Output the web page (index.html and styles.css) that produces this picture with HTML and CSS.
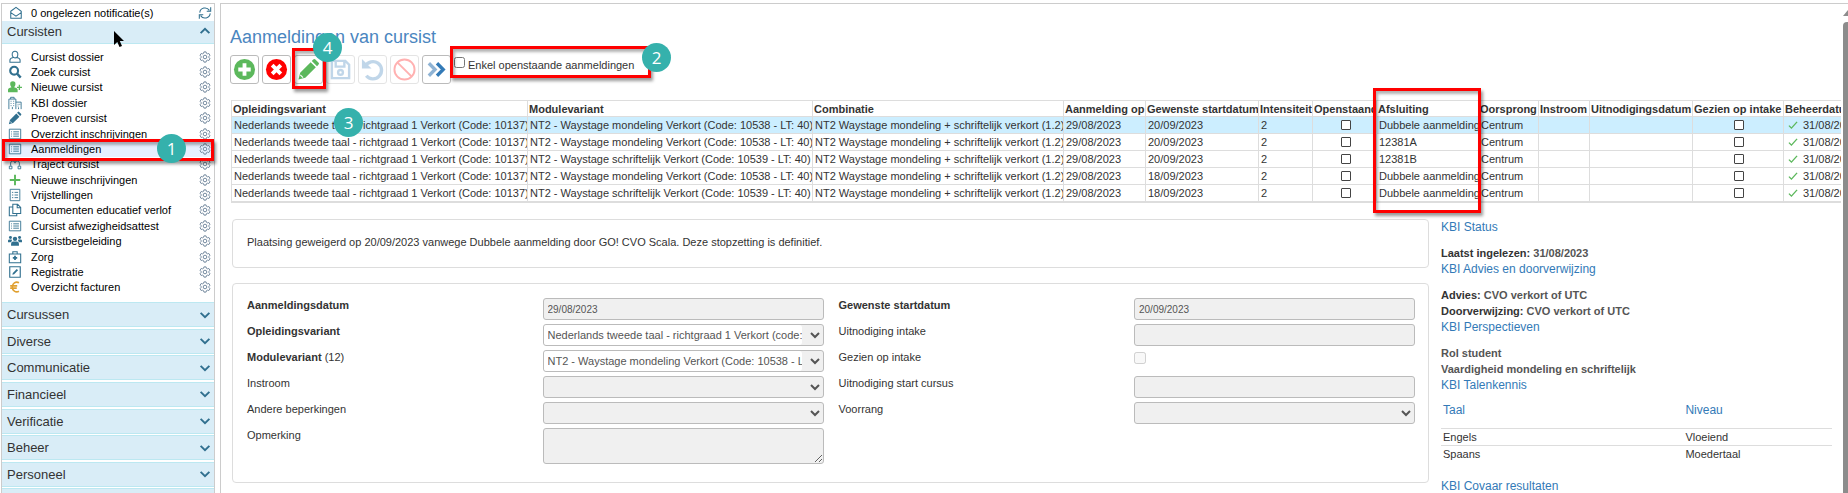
FILE: index.html
```
<!DOCTYPE html>
<html lang="nl">
<head>
    <meta charset="UTF-8">
    <meta name="viewport" content="width=device-width, initial-scale=1.0">
    <title>Aanmeldingen van cursist</title>
    <link rel="stylesheet" href="styles.css">
</head>
<body>
    <svg class="sprite" aria-hidden="true">
        <symbol id="i-gear" viewBox="0 0 16 16"><path d="M6.600 1.200h2.800l.5 1.900 1.300.7 1.900-.5 1.500 2.400-1.300 1.400v1.800l1.300 1.400-1.500 2.400-1.900-.5-1.300.7-.5 1.900H6.600l-.5-1.900-1.300-.7-1.900.5-1.500-2.400 1.300-1.400V7.100L1.400 5.700l1.500-2.400 1.900.5 1.300-.7z" fill="none" stroke="currentColor" stroke-width="1.300"/><circle cx="8" cy="8" r="2.400" fill="none" stroke="currentColor" stroke-width="1.300"/></symbol>
        <symbol id="i-mail" viewBox="0 0 16 16"><path d="M2 6l6-4.500L14 6v8H2zM2 7.500l6 4 6-4" fill="none" stroke="currentColor" stroke-width="1.200"/></symbol>
        <symbol id="i-refresh" viewBox="0 0 16 16"><path d="M2 7.500a6 6 0 0 1 11-2.500M14.500 1.500V6H10M14 8.500A6 6 0 0 1 3 11M1.500 14.500V10H6" fill="none" stroke="currentColor" stroke-width="1.200"/></symbol>
        <symbol id="i-up" viewBox="0 0 16 16"><path d="M3 10.500l5-5 5 5" fill="none" stroke="currentColor" stroke-width="2.200"/></symbol>
        <symbol id="i-down" viewBox="0 0 16 16"><path d="M3 5.500l5 5 5-5" fill="none" stroke="currentColor" stroke-width="2.200"/></symbol>
        <symbol id="i-user" viewBox="0 0 16 16"><path d="M8 1.500a3.200 3.200 0 0 1 3.200 3.500C11.200 7 10 9 8 9S4.800 7 4.800 5A3.200 3.200 0 0 1 8 1.500zM6 8.500c-2.500.5-3.800 1.500-3.800 3V14h11.600v-2.500c0-1.500-1.300-2.500-3.800-3" fill="none" stroke="currentColor" stroke-width="1.200"/></symbol>
        <symbol id="i-search" viewBox="0 0 16 16"><circle cx="7" cy="6.500" r="4.500" fill="none" stroke="currentColor" stroke-width="2.400"/><path d="M10.500 10l4 4.500" stroke="currentColor" stroke-width="2.800"/></symbol>
        <symbol id="i-useradd" viewBox="0 0 16 16"><path d="M5.500 1.500a3 3 0 0 1 3 3.200c0 1.500-.6 2.800-1.500 3.500 2.500.6 4 1.300 4 3V14H0v-2.800c0-1.700 1.500-2.400 4-3-.9-.7-1.500-2-1.500-3.500a3 3 0 0 1 3-3.200z" fill="currentColor"/><path d="M13 5.500v6M10.200 8.500H16" stroke="currentColor" stroke-width="1.500"/></symbol>
        <symbol id="i-building" viewBox="0 0 16 16"><path d="M1 15V3.500h8V15M3 3.500v-2h4v2M9 7h6v8M5 15v-2.500M12 15v-2" fill="none" stroke="currentColor"/><path d="M3 6h1M6 6h1M3 8.500h1M6 8.500h1M3 11h1M6 11h1M11 9.500h1M13 9.500h1M11 11.500h1" stroke="currentColor"/></symbol>
        <symbol id="i-pencil" viewBox="0 0 16 16"><path d="M1 15l1.200-4.800 7.300-7.300 3.600 3.600-7.300 7.300zM10.300 2.100l1-1a1 1 0 0 1 1.500 0l2.100 2.100a1 1 0 0 1 0 1.500l-1 1z" fill="currentColor"/><path d="M2.300 11.800l1.900 1.900" stroke="#fff" stroke-width=".8"/></symbol>
        <symbol id="i-list" viewBox="0 0 16 16"><path d="M1.500 2.500h13v11h-13z" fill="none" stroke="currentColor"/><path d="M3.500 5.500h1M6 5.500h6.500M3.500 8h1M6 8h6.500M3.500 10.500h1M6 10.500h6.500" stroke="currentColor"/></symbol>
        <symbol id="i-route" viewBox="0 0 16 16"><path d="M3 10V7a2.500 2.500 0 0 1 5 0 2.500 2.500 0 0 1 5 0v3M1.500 10.500h3v3h-3zM11.500 10.500h3v3h-3z" fill="none" stroke="currentColor"/></symbol>
        <symbol id="i-plus" viewBox="0 0 16 16"><path d="M8 2v12M2 8h12" stroke="currentColor" stroke-width="2.200"/></symbol>
        <symbol id="i-check" viewBox="0 0 16 16"><path d="M2.500 1.500h11v13h-11z" fill="none" stroke="currentColor"/><path d="M4.500 5h1.500M7.500 5h4M4.500 8h1.500M7.500 8h4M4.500 11h1.500M7.500 11h4" stroke="currentColor"/></symbol>
        <symbol id="i-copy" viewBox="0 0 16 16"><path d="M5.500 12V1.500h5.500L14.500 5v7zM10.500 1.500v4h4M5.500 4.500h-4v10H10V12" fill="none" stroke="currentColor" stroke-width="1.200"/></symbol>
        <symbol id="i-group" viewBox="0 0 16 16"><circle cx="8" cy="5.500" r="2.500" fill="currentColor"/><circle cx="2.800" cy="4" r="1.700" fill="currentColor"/><circle cx="13.200" cy="4" r="1.700" fill="currentColor"/><path d="M3.500 13.500V11a2.500 2.500 0 0 1 2.500-2.500h4a2.500 2.500 0 0 1 2.500 2.500v2.500zM0 9.500V7.500a1.500 1.500 0 0 1 1.500-1.300h2.700L4.500 8 3 9.500zM16 9.500V7.500a1.500 1.500 0 0 0-1.500-1.300h-2.700L11.500 8 13 9.500z" fill="currentColor"/></symbol>
        <symbol id="i-kit" viewBox="0 0 16 16"><path d="M1.500 4.500h13v10h-13zM5.500 4.500v-2.500h5v2.500" fill="none" stroke="currentColor" stroke-width="1.200"/><path d="M8 6.500v5M5.500 9h5" stroke="currentColor" stroke-width="2"/></symbol>
        <symbol id="i-edit" viewBox="0 0 16 16"><path d="M2 2h12v12H2z" fill="none" stroke="currentColor" stroke-width="1.300"/><path d="M5 11l.5-2L10 4.500 11.500 6 7 10.500z" fill="currentColor"/></symbol>
        <symbol id="i-euro" viewBox="0 0 16 16"><path d="M12.500 3.200A5 5 0 0 0 5 8a5 5 0 0 0 7.500 4.800M2.500 6.700h8M2.500 9.300h7.500" fill="none" stroke="currentColor" stroke-width="1.800"/></symbol>
        <symbol id="i-ok" viewBox="0 0 16 16"><path d="M1.500 9l4 4 9-10" fill="none" stroke="currentColor" stroke-width="2.200"/></symbol>
    </svg>

    <div class="app">
        <aside class="sidebar">
            <div class="notice">
                <svg class="icon"><use href="#i-mail"/></svg>
                <span>0 ongelezen notificatie(s)</span>
                <svg class="icon end"><use href="#i-refresh"/></svg>
            </div>
            <button class="section open">Cursisten<svg class="icon"><use href="#i-up"/></svg></button>
            <ul class="menu">
                <li><svg class="icon"><use href="#i-user"/></svg><a href="#">Cursist dossier</a><svg class="gear"><use href="#i-gear"/></svg></li>
                <li><svg class="icon"><use href="#i-search"/></svg><a href="#">Zoek cursist</a><svg class="gear"><use href="#i-gear"/></svg></li>
                <li><svg class="icon green"><use href="#i-useradd"/></svg><a href="#">Nieuwe cursist</a><svg class="gear"><use href="#i-gear"/></svg></li>
                <li><svg class="icon"><use href="#i-building"/></svg><a href="#">KBI dossier</a><svg class="gear"><use href="#i-gear"/></svg></li>
                <li><svg class="icon"><use href="#i-pencil"/></svg><a href="#">Proeven cursist</a><svg class="gear"><use href="#i-gear"/></svg></li>
                <li><svg class="icon"><use href="#i-list"/></svg><a href="#">Overzicht inschrijvingen</a><svg class="gear"><use href="#i-gear"/></svg></li>
                <li class="active"><svg class="icon"><use href="#i-list"/></svg><a href="#">Aanmeldingen</a><svg class="gear"><use href="#i-gear"/></svg>
                    <span class="mark mark-menu"><b class="step">1</b></span></li>
                <li><svg class="icon"><use href="#i-route"/></svg><a href="#">Traject cursist</a><svg class="gear"><use href="#i-gear"/></svg></li>
                <li><svg class="icon green"><use href="#i-plus"/></svg><a href="#">Nieuwe inschrijvingen</a><svg class="gear"><use href="#i-gear"/></svg></li>
                <li><svg class="icon"><use href="#i-check"/></svg><a href="#">Vrijstellingen</a><svg class="gear"><use href="#i-gear"/></svg></li>
                <li><svg class="icon"><use href="#i-copy"/></svg><a href="#">Documenten educatief verlof</a><svg class="gear"><use href="#i-gear"/></svg></li>
                <li><svg class="icon"><use href="#i-list"/></svg><a href="#">Cursist afwezigheidsattest</a><svg class="gear"><use href="#i-gear"/></svg></li>
                <li><svg class="icon"><use href="#i-group"/></svg><a href="#">Cursistbegeleiding</a><svg class="gear"><use href="#i-gear"/></svg></li>
                <li><svg class="icon"><use href="#i-kit"/></svg><a href="#">Zorg</a><svg class="gear"><use href="#i-gear"/></svg></li>
                <li><svg class="icon"><use href="#i-edit"/></svg><a href="#">Registratie</a><svg class="gear"><use href="#i-gear"/></svg></li>
                <li><svg class="icon orange"><use href="#i-euro"/></svg><a href="#">Overzicht facturen</a><svg class="gear"><use href="#i-gear"/></svg></li>
            </ul>
            <div class="sections">
                <button class="section">Cursussen<svg class="icon"><use href="#i-down"/></svg></button>
                <button class="section">Diverse<svg class="icon"><use href="#i-down"/></svg></button>
                <button class="section">Communicatie<svg class="icon"><use href="#i-down"/></svg></button>
                <button class="section">Financieel<svg class="icon"><use href="#i-down"/></svg></button>
                <button class="section">Verificatie<svg class="icon"><use href="#i-down"/></svg></button>
                <button class="section">Beheer<svg class="icon"><use href="#i-down"/></svg></button>
                <button class="section">Personeel<svg class="icon"><use href="#i-down"/></svg></button>
                <button class="section" aria-label="Meer"></button>
            </div>
            <svg class="cursor" viewBox="0 0 12 18"><path d="M1 1v14l3.300-3 2.200 5 2.500-1-2.200-5H11z"/></svg>
        </aside>

        <main class="content">
            <h1>Aanmeldingen van cursist</h1>
            <div class="toolbar">
                <button class="tool" aria-label="Toevoegen"><svg viewBox="0 0 24 24"><circle cx="12" cy="12" r="11" fill="#5cb85c"/><path d="M12 5.500v13M5.500 12h13" stroke="#fff" stroke-width="4"/></svg></button>
                <button class="tool" aria-label="Verwijderen"><svg viewBox="0 0 24 24"><circle cx="12" cy="12" r="11" fill="#f00"/><path d="M7.500 7.500l9 9M16.500 7.500l-9 9" stroke="#fff" stroke-width="4"/></svg></button>
                <button class="tool" aria-label="Bewerken"><svg class="green" viewBox="0 0 16 16"><use href="#i-pencil"/></svg>
                    <span class="mark mark-edit"><b class="step">4</b></span></button>
                <button class="tool off" aria-label="Opslaan"><svg viewBox="0 0 24 24"><path d="M3 3h14l4 4v14H3zM7 3v6h9V3" fill="none" stroke="#337ab7" stroke-width="2.500"/><circle cx="12" cy="15" r="2.500" fill="none" stroke="#337ab7" stroke-width="2.500"/></svg></button>
                <button class="tool off" aria-label="Herstellen"><svg viewBox="0 0 24 24"><path d="M4.500 8.500a9 9 0 1 1 1 10" fill="none" stroke="#337ab7" stroke-width="3.500"/><path d="M1 1v10h10z" fill="#337ab7"/></svg></button>
                <button class="tool off" aria-label="Annuleren"><svg viewBox="0 0 24 24"><circle cx="12" cy="12" r="10.500" fill="none" stroke="#f00" stroke-width="2"/><path d="M4.500 4.500l15 15" stroke="#f00" stroke-width="2"/></svg></button>
                <button class="tool" aria-label="Verder"><svg viewBox="0 0 24 24" fill="none" stroke-width="3.500"><path d="M4 5.500l6.500 6.500L4 18.500" stroke="#8fb3d4"/><path d="M12.500 5.500L19 12l-6.500 6.500" stroke="#337ab7"/></svg></button>
                <label class="filter"><input type="checkbox"><span>Enkel openstaande aanmeldingen</span>
                    <span class="mark mark-filter"><b class="step">2</b></span></label>
            </div>

            <div class="grid-wrap">
                <table class="grid">
                    <colgroup>
                        <col class="w-opl"><col class="w-mod"><col class="w-com"><col class="w-aan"><col class="w-gew"><col class="w-int"><col class="w-ope"><col class="w-afs"><col class="w-oor"><col class="w-ins"><col class="w-uit"><col class="w-gez"><col class="w-beh">
                    </colgroup>
                    <thead>
                        <tr><th>Opleidingsvariant</th><th>Modulevariant</th><th>Combinatie</th><th>Aanmelding op</th><th>Gewenste startdatum</th><th>Intensiteit</th><th>Openstaand</th><th>Afsluiting</th><th>Oorsprong</th><th>Instroom</th><th>Uitnodigingsdatum</th><th>Gezien op intake</th><th>Beheerdatum</th></tr>
                    </thead>
                    <tbody id="rows"></tbody>
                </table>
                <span class="step step-row">3</span>
                <span class="mark mark-col"></span>
            </div>

            <div class="columns">
                <div class="left">
                    <div class="panel message">Plaatsing geweigerd op 20/09/2023 vanwege Dubbele aanmelding door GO! CVO Scala. Deze stopzetting is definitief.</div>
                    <form class="panel form">
                        <div class="fields">
                            <label for="datum"><b>Aanmeldingsdatum</b></label><input type="text" id="datum" value="29/08/2023" readonly>
                            <label for="opleiding"><b>Opleidingsvariant</b></label>
                            <div class="combo"><select aria-label="Opleidingsvariant lijst"><option></option></select><input type="text" id="opleiding" value="Nederlands tweede taal - richtgraad 1 Verkort (code: 10137)"></div>
                            <label for="module"><b>Modulevariant</b> (12)</label>
                            <div class="combo"><select aria-label="Modulevariant lijst"><option></option></select><input type="text" id="module" value="NT2 - Waystage mondeling Verkort (Code: 10538 - LT: 40)"></div>
                            <label for="instroom">Instroom</label><select id="instroom"><option></option></select>
                            <label for="beperk">Andere beperkingen</label><select id="beperk"><option></option></select>
                            <label for="opm">Opmerking</label><textarea id="opm"></textarea>
                        </div>
                        <div class="fields">
                            <label for="start"><b>Gewenste startdatum</b></label><input type="text" id="start" value="20/09/2023" readonly>
                            <label for="uitintake">Uitnodiging intake</label><input type="text" id="uitintake" readonly>
                            <label for="gezien">Gezien op intake</label><input type="checkbox" id="gezien" disabled>
                            <label for="uitstart">Uitnodiging start cursus</label><input type="text" id="uitstart" readonly>
                            <label for="voorrang">Voorrang</label><select id="voorrang"><option></option></select>
                        </div>
                    </form>
                </div>
                <div class="kbi">
                    <h2>KBI Status</h2>
                    <p><b>Laatst ingelezen:</b> 31/08/2023</p>
                    <h2>KBI Advies en doorverwijzing</h2>
                    <p><b>Advies:</b> CVO verkort of UTC<br><b>Doorverwijzing:</b> CVO verkort of UTC</p>
                    <h2>KBI Perspectieven</h2>
                    <p>Rol student<br>Vaardigheid mondeling en schriftelijk</p>
                    <h2>KBI Talenkennis</h2>
                    <table class="talen">
                        <thead><tr><th>Taal</th><th>Niveau</th></tr></thead>
                        <tbody>
                            <tr><td>Engels</td><td>Vloeiend</td></tr>
                            <tr><td>Spaans</td><td>Moedertaal</td></tr>
                        </tbody>
                    </table>
                    <h2>KBI Covaar resultaten</h2>
                </div>
            </div>
        </main>
        <div class="scrollbar"><svg viewBox="0 0 5 6"><path d="M0 6l5-6v6z" fill="#8c8c8c"/></svg><div class="thumb"></div></div>
    </div>

    <script>
        // module, code, startdatum, afsluiting
        const aanmeldingen = [
            ['mondeling', '10538', '20/09/2023', 'Dubbele aanmelding'],
            ['mondeling', '10538', '20/09/2023', '12381A'],
            ['schriftelijk', '10539', '20/09/2023', '12381B'],
            ['mondeling', '10538', '18/09/2023', 'Dubbele aanmelding'],
            ['schriftelijk', '10539', '18/09/2023', 'Dubbele aanmelding']
        ];

        document.getElementById('rows').innerHTML = aanmeldingen.map(([module, code, start, afsluiting], i) => `
            <tr class="${i === 0 ? 'selected' : ''}">
                <td>Nederlands tweede taal - richtgraad 1 Verkort (Code: 10137)</td>
                <td>NT2 - Waystage ${module} Verkort (Code: ${code} - LT: 40)</td>
                <td>NT2 Waystage mondeling + schriftelijk verkort (1.2)</td>
                <td>29/08/2023</td>
                <td>${start}</td>
                <td>2</td>
                <td><input type="checkbox" aria-label="Openstaand"></td>
                <td>${afsluiting}</td>
                <td>Centrum</td>
                <td></td>
                <td></td>
                <td><input type="checkbox" aria-label="Gezien op intake"></td>
                <td><svg class="ok"><use href="#i-ok"/></svg>31/08/2023</td>
            </tr>`).join('');
    </script>
</body>
</html>
```
FILE: styles.css
```
* {
    box-sizing: border-box;
}

body {
    margin: 0;
    height: 100vh;
    overflow: hidden;
    background-color: #fff;
    color: #333;
    font-family: "Liberation Sans", Arial, sans-serif;
    font-size: 11px;
}

button,
input,
select,
textarea {
    font-family: inherit;
}

.sprite {
    display: none;
}

.app {
    display: flex;
    height: 100vh;
    padding-top: 3px;
}

/* Zijbalk */
.sidebar {
    position: relative;
    flex: none;
    width: 214px;
    margin: 0 5px 0 1px;
    border: 1px solid #ccc;
    border-bottom: none;
}

.icon {
    flex: none;
    width: 14px;
    height: 14px;
    color: #31708f;
}

.green {
    color: #5cb85c;
}

.orange {
    color: #e0a030;
}

.notice {
    display: flex;
    align-items: center;
    height: 17px;
    padding: 0 2px 0 7px;
    color: #000;
}

.notice span {
    margin-left: 8px;
}

.end {
    margin-left: auto;
}

.section {
    display: flex;
    align-items: center;
    justify-content: space-between;
    width: 100%;
    height: 25px;
    padding: 0 2px 0 5px;
    border: 1px solid #bce8f1;
    border-width: 1px 0;
    background-color: #d9edf7;
    color: #333;
    font-size: 13px;
    text-align: left;
}

.open {
    height: 23px;
    border-top: none;
    padding-bottom: 2px;
}

.menu {
    display: grid;
    grid-auto-rows: 1fr;
    height: 246px;
    margin: 5px 0 7px;
    padding: 0;
    list-style: none;
}

.menu li {
    position: relative;
    display: flex;
    align-items: center;
    padding: 0 3px 0 6px;
}

.menu a {
    margin-left: 9px;
    color: #000;
    text-decoration: none;
}

.menu .active {
    background-color: #e6f0ff;
}

.gear {
    width: 12px;
    height: 12px;
    margin-left: auto;
    color: #71879c;
}

.sections {
    display: grid;
    grid-auto-rows: 1fr;
    height: 213px;
}

.cursor {
    position: absolute;
    left: 111px;
    top: 26px;
    width: 12px;
    height: 18px;
}

/* Rode kaders en genummerde stappen */
.mark {
    position: absolute;
    z-index: 2;
    border: 3px solid #f00;
    box-shadow: 2px 3px 3px rgba(0, 0, 0, 0.4), inset 2px 3px 3px rgba(0, 0, 0, 0.3);
    pointer-events: none;
}

.step {
    position: absolute;
    z-index: 3;
    width: 29px;
    height: 29px;
    border-radius: 50%;
    background-color: #35b1ac;
    color: #fff;
    font-family: "Open Sans", sans-serif;
    font-size: 17px;
    font-weight: normal;
    line-height: 29px;
    text-align: center;
}

.mark-menu {
    left: 0;
    right: 0;
    top: -2px;
    bottom: -4px;
}

.mark-menu .step {
    right: 25px;
    top: -8px;
}

.mark-edit {
    left: -3px;
    top: -8px;
    width: 34px;
    height: 41px;
}

.mark-edit .step {
    left: 18px;
    top: -18px;
}

.mark-filter {
    left: -4px;
    top: -9px;
    width: 201px;
    height: 32px;
}

.mark-filter .step {
    right: -23px;
    top: -6px;
}

.mark-col {
    left: 1142px;
    top: -12px;
    width: 108px;
    height: 125px;
}

.step-row {
    left: 103px;
    top: 8px;
}

/* Inhoud */
.content {
    flex: 1;
    min-width: 0;
    padding: 22px 2px 0 9px;
    border: 1px solid #ccc;
    border-width: 1px 0 0 1px;
}

h1 {
    margin: 0 0 7px;
    color: #4a86c0;
    font-size: 18px;
    font-weight: normal;
    line-height: 22px;
}

.toolbar {
    display: flex;
    gap: 3px;
    height: 45px;
}

.tool {
    position: relative;
    width: 29px;
    height: 29px;
    padding: 2px;
    border: 1px solid #bbb;
    border-radius: 3px;
    background-color: #fff;
}

.tool svg {
    display: block;
    width: 23px;
    height: 23px;
}

.off {
    border-color: #e4e4e4;
}

.off svg {
    opacity: 0.3;
}

.filter {
    position: relative;
    display: flex;
    align-self: flex-start;
    line-height: 20px;
}

.filter input {
    width: 11px;
    height: 11px;
    margin: 2px 3px 0 0;
}

.grid-wrap {
    position: relative;
    height: 119px;
    margin-left: 1px;
}

.grid {
    width: 100%;
    border-collapse: collapse;
    table-layout: fixed;
    border-bottom: 2px solid #ddd;
}

.grid th,
.grid td {
    height: 17px;
    padding: 0 0 0 2px;
    border: 1px solid #ddd;
    border-right-width: 0;
    overflow: hidden;
    line-height: 14px;
    text-align: left;
    white-space: nowrap;
}

.grid th {
    height: 16px;
    padding-left: 1px;
}

.grid input {
    display: block;
    width: 10px;
    height: 10px;
    margin: 0 auto;
    appearance: none;
    border: 1px solid #444;
    border-radius: 1px;
    background-color: #fff;
}

.grid .selected {
    background-color: #cef;
}

.ok {
    width: 10px;
    height: 10px;
    margin: 0 5px 0 2px;
    color: #5cb85c;
    vertical-align: -1px;
}

.w-opl { width: 296px; }
.w-mod { width: 285px; }
.w-com { width: 251px; }
.w-aan { width: 82px; }
.w-gew { width: 113px; }
.w-int { width: 54px; }
.w-ope { width: 64px; }
.w-afs { width: 102px; }
.w-oor { width: 60px; }
.w-ins { width: 51px; }
.w-uit { width: 103px; }
.w-gez { width: 91px; }

.columns {
    display: grid;
    grid-template-columns: 1197px 1fr;
    gap: 12px;
    padding: 0 9px 0 2px;
}

.panel {
    border: 1px solid #ddd;
    border-radius: 4px;
}

.message {
    height: 49px;
    margin-bottom: 15px;
    padding: 14px;
    line-height: 16px;
}

.form {
    display: grid;
    grid-template-columns: 1fr 1fr;
    gap: 15px;
    height: 200px;
    padding: 14px 13px 0 14px;
}

.fields {
    display: grid;
    grid-template-columns: 1fr 281px;
    grid-auto-rows: min-content;
    gap: 4px 0;
}

.fields label {
    line-height: 14px;
}

.fields input[type="text"],
.fields select,
.fields textarea {
    width: 100%;
    height: 22px;
    padding: 0 4px;
    border: 1px solid #bbb;
    border-radius: 3px;
    background-color: #f0f0f0;
    color: #555;
    font-size: 10px;
}

.fields textarea {
    height: 36px;
}

.fields input[type="checkbox"] {
    width: 12px;
    height: 12px;
    margin: 2px 0 8px;
}

.combo {
    position: relative;
}

.combo select {
    display: block;
}

.fields .combo input {
    position: absolute;
    left: 1px;
    top: 1px;
    width: 258px;
    height: 20px;
    padding-right: 0;
    border: none;
    background-color: #fff;
    font-size: 11px;
}

/* KBI kolom */
.kbi h2 {
    margin: 0;
    color: #337ab7;
    font-size: 12px;
    font-weight: normal;
    line-height: 16px;
}

.kbi p {
    margin: 10px 0 0;
    color: #555;
    font-weight: bold;
    line-height: 16px;
}

.kbi p b {
    color: #333;
}

.talen {
    width: 100%;
    margin: 3px 0 16px;
    border-collapse: collapse;
    table-layout: fixed;
}

.talen th {
    height: 32px;
    padding: 0 2px 4px;
    color: #337ab7;
    font-size: 12px;
    font-weight: normal;
    text-align: left;
}

.talen th:first-child {
    width: 62%;
}

.talen td {
    height: 17px;
    padding: 0 2px;
    border-top: 1px solid #ddd;
}

.scrollbar {
    display: flex;
    flex-direction: column;
    flex: none;
    gap: 6px;
    width: 5px;
    padding-top: 6px;
    border-top: 1px solid #ccc;
}

.scrollbar svg {
    flex: none;
    width: 5px;
    height: 6px;
}

.thumb {
    flex: 1;
    border-radius: 4px 0 0 0;
    background-color: #8c8c8c;
}
```
